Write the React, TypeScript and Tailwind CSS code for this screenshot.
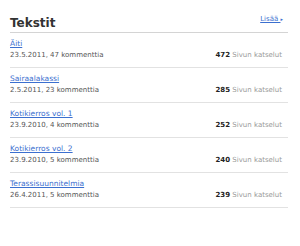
import React from "react";

const posts = [
  { title: "Äiti", date: "23.5.2011", comments: 47, views: 472 },
  { title: "Sairaalakassi", date: "2.5.2011", comments: 23, views: 285 },
  { title: "Kotikierros vol. 1", date: "23.9.2010", comments: 4, views: 252 },
  { title: "Kotikierros vol. 2", date: "23.9.2010", comments: 5, views: 240 },
  { title: "Terassisuunnitelmia", date: "26.4.2011", comments: 5, views: 239 },
];

export default function App() {
  return (
    <div className="w-[300px] h-[246px] bg-white pl-[10px] pr-[12px] font-['DejaVu_Sans',Verdana,sans-serif]">
      {/* Header */}
      <div className="flex justify-between items-start pt-[15px] pb-[1px] border-b border-[#d4d4d4]">
        <h2 className="text-[12px] leading-[16px] font-bold text-[#333]">Tekstit</h2>
        <a href="#" className="-mt-[1px] mr-[5px] text-[7px] leading-[10px] text-[#3b6fcf] underline">
          Lisää <span className="inline-block text-[5px] align-middle no-underline">▸</span>
        </a>
      </div>

      {/* List */}
      <ul>
        {posts.map((p) => (
          <li key={p.title} className="pt-[5px] pb-[6px] border-b border-[#e2e2e2]">
            <a href="#" className="block text-[7.5px] leading-[11px] text-[#3b6fcf] underline">
              {p.title}
            </a>
            <div className="flex justify-between text-[7px] leading-[12px] pr-[6px]">
              <span className="text-[#555]">
                {p.date}, {p.comments} kommenttia
              </span>
              <span className="text-[#999]">
                <b className="text-[#222]">{p.views}</b> Sivun katselut
              </span>
            </div>
          </li>
        ))}
      </ul>
    </div>
  );
}
